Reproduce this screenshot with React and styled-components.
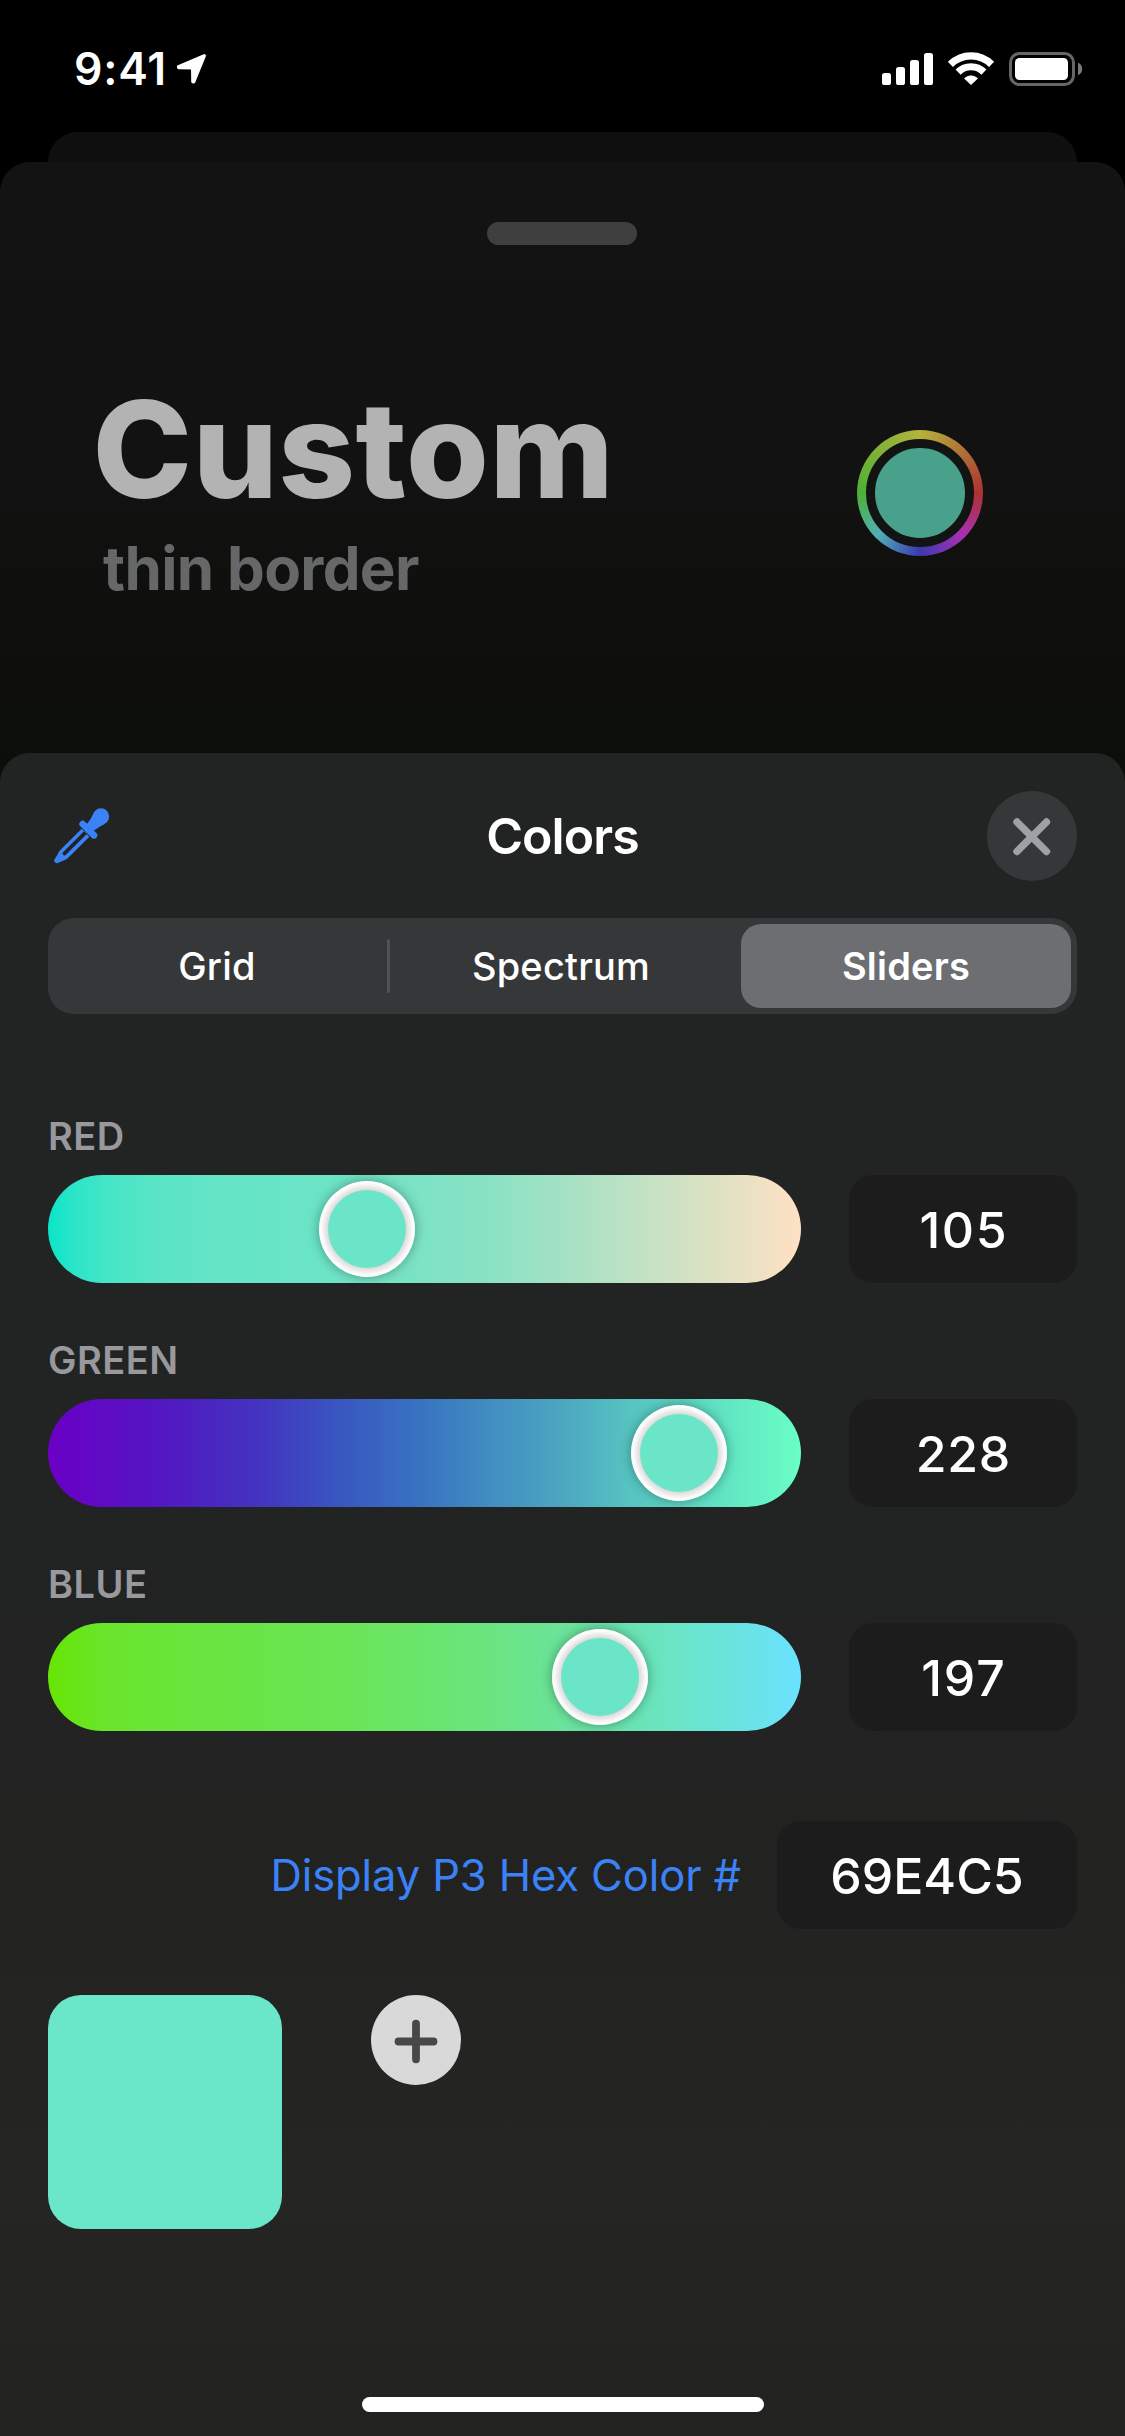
import React from "react";
import styled, { createGlobalStyle } from "styled-components";

const Global = createGlobalStyle`
  * { box-sizing: border-box; }
  body { margin: 0; background: #000; }
`;

const Screen = styled.main`
  width: 1125px;
  height: 2436px;
  display: flex;
  flex-direction: column;
  background: #000;
  color: #fff;
  font-family: Inter, "Liberation Sans", sans-serif;
  overflow: hidden;
`;

const StatusBar = styled.header`
  display: flex;
  align-items: center;
  height: 132px;
  padding: 6px 42px 0 74px;
`;

const Time = styled.span`
  font-size: 44.5px;
  font-weight: 600;
  line-height: 54px;
  letter-spacing: 0.8px;
  margin-right: 10px;
`;

const Indicators = styled.div`
  display: flex;
  align-items: center;
  gap: 14px;
  margin-left: auto;
`;

const BackCard = styled.div`
  height: 30px;
  margin: 0 48px;
  border-radius: 30px 30px 0 0;
  background: #0f0f0f;
`;

const Sheet = styled.section`
  flex: 1;
  display: flex;
  flex-direction: column;
  padding-top: 60px;
  border-radius: 30px 30px 0 0;
  background: linear-gradient(#131313 0, #121212 300px, #0f100d 450px, #0c0e09 600px);
`;

const Grabber = styled.div`
  width: 150px;
  height: 23px;
  border-radius: 12px;
  margin: 0 auto 0 487px;
  background: #3f3f40;
`;

const Hero = styled.div`
  display: flex;
  justify-content: space-between;
  height: 508px;
  padding: 139px 142px 0 92.5px;
`;

const HeroTitle = styled.h1`
  margin: 0;
  font-size: 134px;
  line-height: 130px;
  font-weight: 800;
  letter-spacing: 0.5px;
  color: #b3b3b3;
`;

const HeroSubtitle = styled.p`
  margin: 18px 0 0 10.5px;
  font-size: 60px;
  line-height: 72px;
  font-weight: 700;
  letter-spacing: -0.65px;
  color: #666769;
`;

const ColorWell = styled.div`
  width: 126px;
  height: 126px;
  margin-top: 45.5px;
  padding: 9px;
  border-radius: 50%;
  background: conic-gradient(
    #b3b33c,
    #ad3232 90deg,
    #a930b3 135deg,
    #3c38b0 180deg,
    #50afb5 225deg,
    #4db035 270deg,
    #b3b33c
  );
`;

const WellFill = styled.div`
  width: 100%;
  height: 100%;
  border-radius: 50%;
  border: 9px solid #111413;
  background: #49a18b;
`;

const Picker = styled.section`
  flex: 1;
  display: flex;
  flex-direction: column;
  padding: 38px 48px 24px;
  border-radius: 30px 30px 0 0;
  background: linear-gradient(#222423, #212423 40%, #222221 65%, #252524 85%, #222221);
`;

const PickerHeader = styled.div`
  display: grid;
  grid-template-columns: 90px 1fr 90px;
  align-items: center;
  height: 90px;
`;

const PickerTitle = styled.h2`
  margin: 0;
  text-align: center;
  font-size: 50px;
  line-height: 60px;
  font-weight: 600;
  letter-spacing: -0.9px;
`;

const IconButton = styled.button`
  display: flex;
  flex: none;
  width: 90px;
  height: 90px;
  padding: 0;
  border: 0;
  border-radius: 50%;
  background: ${(p) => p.$bg || "transparent"};
`;

const Segmented = styled.div`
  display: grid;
  grid-template-columns: 333px 3px 351px 330px;
  align-items: center;
  height: 96px;
  margin-top: 37px;
  padding: 6px;
  border-radius: 26px;
  background: #363739;
`;

const Segment = styled.div`
  height: 84px;
  line-height: 84px;
  padding-right: ${(p) => p.$inset || 0}px;
  border-radius: 20px;
  text-align: center;
  font-size: 38px;
  letter-spacing: 0.2px;
  font-weight: ${(p) => (p.$active ? 560 : 460)};
  background: ${(p) => (p.$active ? "#6d6e72" : "transparent")};
`;

const Divider = styled.div`
  height: 54px;
  border-radius: 2px;
  background: #505153;
`;

const Channels = styled.div`
  display: flex;
  flex-direction: column;
  gap: 53px;
  margin-top: 98px;
`;

const Label = styled.div`
  margin-bottom: 15px;
  font-size: 38px;
  line-height: 48px;
  font-weight: 600;
  letter-spacing: 0.5px;
  color: #98989e;
`;

const ChannelRow = styled.div`
  display: flex;
  justify-content: space-between;
`;

const Track = styled.div`
  width: 753px;
  height: 108px;
  padding: 6px;
  border-radius: 54px;
  background: ${(p) => p.$gradient};
`;

const Thumb = styled.div`
  width: 96px;
  height: 96px;
  padding: 9px;
  border-radius: 50%;
  background: radial-gradient(circle closest-side, #d8d8d8 80%, #fff 97%);
  box-shadow: 0 0 12px rgba(0, 0, 0, 0.35);

  &::before {
    content: "";
    display: block;
    height: 78px;
    border-radius: 50%;
    background: #6ae5c7;
  }
`;

const ValueBox = styled.div`
  width: ${(p) => p.$width || 228}px;
  height: 108px;
  padding: 1px 0 0 ${(p) => p.$tracking || 0}px;
  line-height: 108px;
  border-radius: 24px;
  background: #1c1c1c;
  text-align: center;
  font-size: 50px;
  font-weight: 500;
  letter-spacing: ${(p) => p.$tracking || 0}px;
`;

const HexRow = styled.div`
  display: flex;
  align-items: center;
  justify-content: flex-end;
  gap: 36px;
  margin-top: 90px;
`;

const HexLabel = styled.span`
  font-size: 43.5px;
  letter-spacing: -0.1px;
  color: #3b82f7;
`;

const Swatches = styled.div`
  display: flex;
  gap: 89px;
  margin-top: 66px;
`;

const Swatch = styled.div`
  width: 234px;
  height: 234px;
  border-radius: 33px;
  background: #6ae7c8;
`;

const HomeIndicator = styled.div`
  width: 402px;
  height: 15px;
  margin: auto auto 0;
  border-radius: 8px;
  background: #fff;
`;

const LocationArrow = () => (
  <svg width="30" height="32" viewBox="177 53 30 32">
    <path
      d="M204.3 55.8 178.5 66.7 178.6 67.6 192.6 67.8 192.8 81.8 193.7 82Z"
      fill="#fff"
      stroke="#fff"
      strokeWidth="3.2"
      strokeLinejoin="round"
    />
  </svg>
);

const SignalIcon = () => (
  <svg width="51" height="34" viewBox="0 0 51 34">
    <g fill="#fff">
      <rect x="0" y="21" width="9" height="12" rx="2.6" />
      <rect x="14" y="15" width="9" height="18" rx="2.6" />
      <rect x="28" y="8" width="9" height="25" rx="2.6" />
      <rect x="42" y="1" width="9" height="32" rx="2.6" />
    </g>
  </svg>
);

const WifiIcon = () => (
  <svg width="48" height="34" viewBox="947 52 48 34">
    <g fill="none" stroke="#fff" strokeWidth="7.2">
      <path d="M950.4 64.4A29 29 0 0 1 991.6 64.4" />
      <path d="M958.1 72.1A18.2 18.2 0 0 1 983.9 72.1" />
    </g>
    <path
      d="M971 84.6 964.5 78.4A9.6 9.6 0 0 1 977.5 78.4Z"
      fill="#fff"
      stroke="#fff"
      strokeWidth="0.8"
      strokeLinejoin="round"
    />
  </svg>
);

const BatteryIcon = () => (
  <svg width="74" height="34" viewBox="0 0 74 34">
    <rect x="1.5" y="1.5" width="63" height="31" rx="9" fill="none" stroke="#666" strokeWidth="3" />
    <rect x="6" y="6" width="53" height="22" rx="4.5" fill="#fff" />
    <path d="M69 10.8C72 12 73.2 14.3 73.2 17S72 22 69 23.2Z" fill="#7a7a7a" />
  </svg>
);

const Eyedropper = () => (
  <svg width="75" height="75" viewBox="9 -4 225 225">
    <g fill="#3b82f7">
      <circle cx="168" cy="48.5" r="24.5" />
      <path d="M147 36Q138 58 124 73L144 93Q162 79 180 70Z" />
      <path d="M113 71 147 105" stroke="#3b82f7" strokeWidth="20" strokeLinecap="round" />
      <path
        fillRule="evenodd"
        d="M110 85 46 149Q41 154 38 162L28 178Q25 182 30 186 34 190 38 188L54 181Q64 178 69 173L133 109ZM118 92 126 100 62 164A5.7 5.7 0 0 1 54 156Z"
      />
    </g>
  </svg>
);

const CloseIcon = () => (
  <svg width="90" height="90" viewBox="0 0 90 90">
    <path d="M30 31 59.5 60.5M59.5 31 30 60.5" stroke="#a0a0a7" strokeWidth="7.4" strokeLinecap="round" />
  </svg>
);

const PlusIcon = () => (
  <svg width="90" height="90" viewBox="0 0 90 90">
    <path d="M27.5 46.5H62.5M45 28.7V64.3" stroke="#484848" strokeWidth="7.8" strokeLinecap="round" />
  </svg>
);

const channels = [
  {
    name: "RED",
    value: 105,
    tracking: 1.6,
    gradient:
      "linear-gradient(90deg,#0ae5c8,#2ce5c8 3.5%,#45e5c7 8%,#58e5c6 14%,#62e5c6 21%,#6be4c6 36%,#7ae3c5 48%,#87e2c4 57%,#a3e1c4 68%,#c6e2c4 80%,#e2e1c3 90%,#ffe1c4)",
  },
  {
    name: "GREEN",
    value: 228,
    tracking: 0.7,
    gradient:
      "linear-gradient(90deg,#6a00c5,#5e0cc4 8%,#5515c3 14%,#4c22c1 20%,#4334c0 28%,#3957c1 39%,#3875c1 50%,#4ba6c1 68%,#56c3c1 77%,#62e8c4 91%,#69ffc4)",
  },
  {
    name: "BLUE",
    value: 197,
    tracking: 1.8,
    gradient:
      "linear-gradient(90deg,#67e505,#69e52d 8%,#6ae53f 20%,#6ae557 40%,#6ae577 55%,#6be39a 68%,#6ae3b5 78%,#6ae5c8 84%,#6ae3e6 93%,#6ae2ff)",
  },
];

// Distance the thumb can travel inside the track, in pixels.
const TRAVEL = 645;

function Channel({ name, value, gradient, tracking }) {
  return (
    <div>
      <Label>{name}</Label>
      <ChannelRow>
        <Track $gradient={gradient}>
          <Thumb style={{ marginLeft: (value / 255) * TRAVEL - 0.15 }} />
        </Track>
        <ValueBox $tracking={tracking}>{value}</ValueBox>
      </ChannelRow>
    </div>
  );
}

export default function App() {
  return (
    <Screen>
      <Global />
      <StatusBar>
        <Time>9:41</Time>
        <LocationArrow />
        <Indicators>
          <SignalIcon />
          <WifiIcon />
          <BatteryIcon />
        </Indicators>
      </StatusBar>
      <BackCard />
      <Sheet>
        <Grabber />
        <Hero>
          <div>
            <HeroTitle>Custom</HeroTitle>
            <HeroSubtitle>thin border</HeroSubtitle>
          </div>
          <ColorWell>
            <WellFill />
          </ColorWell>
        </Hero>
        <Picker>
          <PickerHeader>
            <Eyedropper />
            <PickerTitle>Colors</PickerTitle>
            <IconButton $bg="#353739" aria-label="Close">
              <CloseIcon />
            </IconButton>
          </PickerHeader>
          <Segmented>
            <Segment $inset={7}>Grid</Segment>
            <Divider />
            <Segment $inset={9}>Spectrum</Segment>
            <Segment $active>Sliders</Segment>
          </Segmented>
          <Channels>
            {channels.map((c) => (
              <Channel key={c.name} {...c} />
            ))}
          </Channels>
          <HexRow>
            <HexLabel>Display P3 Hex Color #</HexLabel>
            <ValueBox $width={300}>69E4C5</ValueBox>
          </HexRow>
          <Swatches>
            <Swatch />
            <IconButton $bg="#d9d9d9" aria-label="Add color">
              <PlusIcon />
            </IconButton>
          </Swatches>
          <HomeIndicator />
        </Picker>
      </Sheet>
    </Screen>
  );
}
